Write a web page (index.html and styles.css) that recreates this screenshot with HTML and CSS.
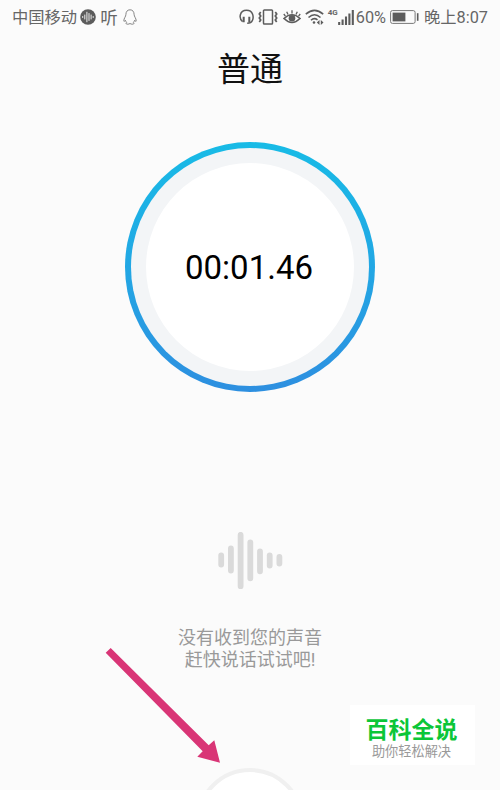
FILE: index.html
```
<!DOCTYPE html>
<html lang="zh-CN">
<head>
    <meta charset="UTF-8">
    <meta name="viewport" content="width=device-width, initial-scale=1.0">
    <title>普通</title>
    <link rel="stylesheet" href="styles.css">
</head>
<body>
    <div class="screen">
        <header class="status-bar">
            <div class="status-left">
                <span>中国移动</span>
                <svg class="wave-badge" width="16" height="16" viewBox="0 0 16 16">
                    <circle cx="8" cy="8" r="7.8" fill="#5c5c5c"/>
                    <path d="M2.700 7.500v1M4.800 6v4M6.900 3.200v9.600M9 4.500v7M11.100 6v4M13.200 7.500v1" stroke="#eee" stroke-width="1" stroke-linecap="round"/>
                </svg>
                <span class="listen">听</span>
                <svg class="penguin" width="14" height="16" viewBox="0 0 14 16">
                    <path d="M7 .8C4.200 .8 2.900 2.900 2.900 5.500C2.900 7.500 .8 9.300 .8 11.800C.8 12.900 1.700 12.300 2.400 11.300C2.600 12.200 3.100 12.800 3.700 13.300C2.800 13.700 2.700 15.200 4.200 15.200C5.500 15.200 6.500 15 7 14.500C7.500 15 8.500 15.200 9.800 15.200C11.300 15.200 11.200 13.700 10.300 13.300C10.900 12.800 11.400 12.200 11.600 11.300C12.300 12.300 13.200 12.900 13.200 11.800C13.200 9.300 11.100 7.500 11.100 5.500C11.100 2.900 9.800 .8 7 .8Z" fill="none" stroke="#777" stroke-width=".9"/>
                </svg>
            </div>
            <div class="status-right">
                <svg class="headset" width="15" height="16" viewBox="0 0 15 16" fill="none" stroke="#5c5c5c">
                    <path d="M3.600 12.600C-.5 9.500 .5 1.300 7.500 1.300C14.500 1.300 14.800 8.500 13.400 11.500Q12.200 14.300 8.200 14.300" stroke-width="1.500"/>
                    <path d="M4.700 7.800v5.400M10.300 7.800v5.400" stroke-width="2"/>
                </svg>
                <svg class="vibrate" width="20" height="16" viewBox="0 0 20 16" fill="none" stroke="#5c5c5c">
                    <rect x="5.500" y="1" width="9" height="14" rx=".8" stroke-width="1.500"/>
                    <path d="M2.700 3l-1.400 2 1.400 2-1.400 2 1.400 2-1.400 2M17.300 3l1.400 2-1.400 2 1.400 2-1.400 2 1.400 2" stroke-width="1.700"/>
                </svg>
                <svg class="eye" width="18" height="16" viewBox="0 0 18 16" fill="none" stroke="#5c5c5c">
                    <path d="M1 9.500Q9 2 17 9.500Q9 17.500 1 9.500Z" stroke-width="1.600"/>
                    <circle cx="9" cy="9.300" r="3.300" fill="#5c5c5c" stroke="none"/>
                    <path d="M9 4.500V1.200M5 5.500L3.700 2.700M13 5.500l1.300-2.800M2.400 7.200L.8 5M15.600 7.200L17.200 5" stroke-width="1.300"/>
                </svg>
                <svg class="wifi" width="19" height="16" viewBox="0 0 19 16" fill="none" stroke="#5c5c5c">
                    <path d="M.8 5.200Q9.500-2.300 18.200 5.200M3.500 8.500Q9.500 3 15.500 8.500M6 11.300Q9 8.300 12.500 10.800" stroke-width="1.600"/>
                    <circle cx="9" cy="13.500" r="1.300" fill="#5c5c5c" stroke="none"/>
                    <path d="M14.500 11l-2.700 2.500 2.700 2.500zM15.800 11l2.700 2.500-2.700 2.500z" fill="#5c5c5c" stroke="none"/>
                </svg>
                <span class="network">4G</span>
                <svg class="signal" width="16" height="15" viewBox="0 0 16 15">
                    <path d="M1.200 12v3M4.600 9.500V15M8 6.500V15M11.400 3.500V15M14.800 0V15" stroke="#5c5c5c" stroke-width="2.100"/>
                </svg>
                <span class="percent">60%</span>
                <svg class="battery" width="29" height="14" viewBox="0 0 29 14">
                    <rect x=".6" y=".6" width="24.500" height="12.800" rx="1.800" fill="none" stroke="#777" stroke-width="1"/>
                    <rect x="2.600" y="2.600" width="12.800" height="8.800" fill="#5c5c5c"/>
                    <path d="M27.700 3.200v7.600" stroke="#5c5c5c" stroke-width="1.600"/>
                </svg>
                <span class="clock">晚上8:07</span>
            </div>
        </header>

        <h1 class="title">普通</h1>

        <div class="dial">
            <div class="dial-track">
                <div class="dial-face">00:01.46</div>
            </div>
        </div>

        <svg class="voice" width="66" height="58" viewBox="0 0 66 58">
            <path d="M3.200 23.500v9M12.900 16.500v22M22.600 2.800v51.400M32.300 10.300v36M42 19.300v20M51.700 23.500v10M61.400 25v6.500" stroke="#dadada" stroke-width="5.800" stroke-linecap="round"/>
        </svg>

        <p class="hint">没有收到您的声音<br>赶快说话试试吧!</p>

        <div class="record-button"></div>

        <!-- Pointer to the record button -->
        <svg class="arrow" width="116" height="116" viewBox="0 0 116 116">
            <path d="M.7 4.700L5.700 0L103.700 97.300L109.300 92.300L115 114.700L92.300 108.700L97.700 103.300Z" fill="#d93576"/>
        </svg>

        <div class="watermark">
            <div class="watermark-name">百科全说</div>
            <div class="watermark-slogan">助你轻松解决</div>
        </div>
    </div>
</body>
</html>
```
FILE: styles.css
```
body {
    margin: 0;
    background-color: #fbfbfb;
    font-family: Roboto, "Noto Sans CJK SC", sans-serif;
}

.screen {
    position: relative;
    display: flex;
    flex-direction: column;
    align-items: center;
    width: 500px;
    height: 790px;
    overflow: hidden;
}

.status-bar {
    display: flex;
    flex: none;
    justify-content: space-between;
    box-sizing: border-box;
    width: 100%;
    height: 34px;
    padding: 0 12px;
    color: #666;
    font-size: 16.3px;
    line-height: 34px;
    white-space: nowrap;
}

.status-left span,
.percent,
.clock {
    padding-top: 2px;
}

.status-left,
.status-right {
    display: flex;
    align-items: center;
    height: 34px;
}

.status-left svg,
.status-right svg {
    flex: none;
}

.wave-badge {
    margin-left: 3px;
}

.listen {
    margin-left: 4px;
    font-size: 17.5px;
}

.penguin {
    margin-left: 5px;
}

.vibrate {
    margin-left: 4px;
}

.eye {
    margin-left: 5px;
}

.wifi {
    margin-left: 4px;
}

.network {
    margin: 0 0 9px 4px;
    font-size: 8px;
    font-weight: bold;
    line-height: 10px;
}

.percent {
    margin-left: 2px;
}

.battery {
    margin-left: 4px;
}

.clock {
    margin-left: 5px;
}

.title {
    flex: none;
    margin: 12px 0 0;
    color: #111;
    font-size: 33px;
    font-weight: normal;
    line-height: 48px;
}

.dial {
    flex: none;
    box-sizing: border-box;
    width: 250px;
    height: 250px;
    margin-top: 48px;
    padding: 6px;
    border-radius: 50%;
    background: linear-gradient(#18bbe6, #22a7e4 50%, #2d8fe0);
}

.dial-track {
    display: flex;
    align-items: center;
    justify-content: center;
    height: 100%;
    border-radius: 50%;
    background-color: #f3f5f7;
}

.dial-face {
    box-sizing: border-box;
    width: 208px;
    height: 208px;
    padding-right: 2px;
    border-radius: 50%;
    background-color: #fff;
    color: #000;
    font-size: 33px;
    line-height: 210px;
    text-align: center;
}

.voice {
    flex: none;
    margin: 140px 0 0 2px;
}

.hint {
    flex: none;
    margin: 37px 0 0;
    color: #999;
    font-size: 18px;
    line-height: 22px;
    text-align: center;
}

.record-button {
    flex: none;
    box-sizing: border-box;
    width: 108px;
    height: 108px;
    margin-top: 97px;
    border: 4px solid #f0f0f0;
    border-radius: 50%;
    background-color: #fff;
}

.arrow {
    position: absolute;
    left: 105px;
    top: 648px;
}

.watermark {
    position: absolute;
    left: 350px;
    top: 705px;
    width: 123px;
    height: 60px;
    padding-right: 2px;
    background-color: #fff;
    text-align: center;
    white-space: nowrap;
}

.watermark-name {
    margin-top: 13px;
    color: #0bc638;
    font-size: 23px;
    font-weight: bold;
    line-height: 26px;
}

.watermark-slogan {
    color: #999;
    font-size: 13.2px;
    line-height: 16px;
}
```
